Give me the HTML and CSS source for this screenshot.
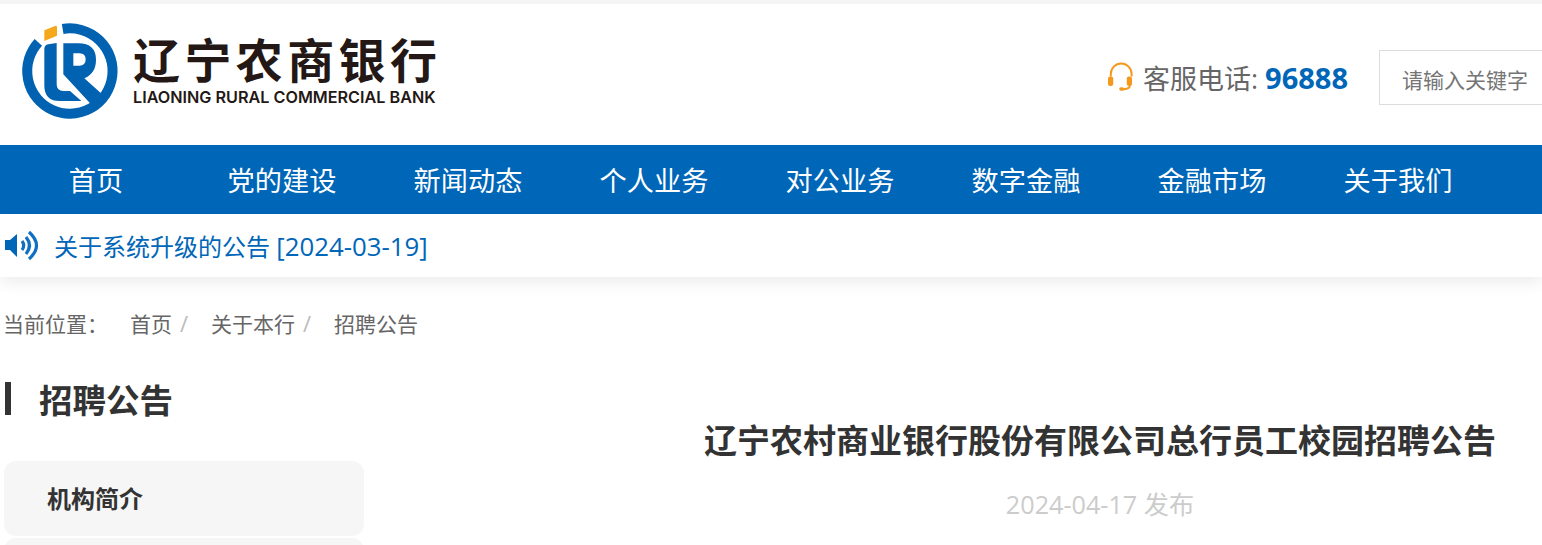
FILE: index.html
```html
<!DOCTYPE html>
<html lang="zh-CN">
<head>
    <meta charset="UTF-8">
    <meta name="viewport" content="width=device-width, initial-scale=1.0">
    <title>招聘公告</title>
    <link rel="stylesheet" href="styles.css">
</head>
<body>
    <header class="header">
        <a class="logo" href="#">
            <svg class="logo-mark" viewBox="0 0 330 330">
                <path class="ring" d="M143 42A128 128 0 1 1 70 82"/>
                <path class="spark" d="M88 46L120 33Q126 31 126 37V62L88 78Z"/>
                <path class="letter" d="M88 102Q88 90 100 88L125 84V208Q125 228 145 228H165L199 258H135Q88 258 88 212Z"/>
                <path class="letter" fill-rule="evenodd" d="M145 85H190Q243 85 243 135Q243 175 208 190L258 235L228 268L145 178ZM175 115V152H193Q212 152 212 133Q212 115 193 115Z"/>
            </svg>
            <div class="logo-text">
                <div class="logo-cn">辽宁农商银行</div>
                <div class="logo-en">LIAONING RURAL COMMERCIAL BANK</div>
            </div>
        </a>
        <div class="header-right">
            <svg class="phone-icon" viewBox="0 0 40 40">
                <path d="M6 18V15A13 13 0 0 1 32 15V18"/>
                <rect x="2.500" y="18" width="6.500" height="12" rx="2.500"/>
                <rect x="26" y="18" width="6.500" height="12" rx="2.500"/>
                <path d="M30 30Q29 34 21 34"/>
                <rect x="16.500" y="31.500" width="6" height="4.500" rx="2.200"/>
            </svg>
            <div class="phone">客服电话: <b>96888</b></div>
            <input class="search" type="text" placeholder="请输入关键字">
        </div>
    </header>

    <nav class="nav">
        <a href="#">首页</a>
        <a href="#">党的建设</a>
        <a href="#">新闻动态</a>
        <a href="#">个人业务</a>
        <a href="#">对公业务</a>
        <a href="#">数字金融</a>
        <a href="#">金融市场</a>
        <a href="#">关于我们</a>
    </nav>

    <div class="notice">
        <svg class="notice-icon" viewBox="0 0 44 40">
            <path class="horn" d="M5 14H10L17 8V31L10 24H5Z"/>
            <path d="M22 15Q25.500 19.500 22 24"/>
            <path d="M26 11Q33 19.500 26 28"/>
            <path d="M29 6Q44 19.500 29 33"/>
        </svg>
        <a href="#">关于系统升级的公告 <span class="notice-date">[2024-03-19]</span></a>
    </div>

    <div class="crumbs">
        <span class="crumbs-label">当前位置：</span>
        <a href="#">首页</a><i>/</i>
        <a href="#">关于本行</a><i>/</i>
        <a href="#">招聘公告</a>
    </div>

    <div class="content">
        <aside class="side">
            <h2 class="side-title">招聘公告</h2>
            <ul class="side-menu">
                <li>机构简介</li>
                <li></li>
            </ul>
        </aside>
        <main class="article">
            <h1 class="article-title">辽宁农村商业银行股份有限公司总行员工校园招聘公告</h1>
            <p class="article-date">2024-04-17 发布</p>
        </main>
    </div>
</body>
</html>
```

FILE: styles.css
```css
/* Global Styles */
html, body {
    height: 545px;
    overflow: hidden;
}

body {
    margin: 0;
    padding: 0;
    font-family: 'Open Sans', 'Noto Sans CJK SC', sans-serif;
    color: #666;
    background-color: #fff;
    border-top: 4px solid #f5f5f5;
}

a {
    color: inherit;
    text-decoration: none;
}

/* Header */
.header {
    display: flex;
    justify-content: space-between;
    align-items: center;
    height: 141px;
}

.logo {
    display: flex;
    align-items: center;
    margin-left: 15px;
    margin-top: -9px;
}

.logo-mark {
    width: 110px;
    height: 110px;
    flex-shrink: 0;
}

.ring {
    fill: none;
    stroke: #0062b1;
    stroke-width: 30;
}

.spark {
    fill: #f5a81c;
}

.letter {
    fill: #0062b1;
}

.logo-text {
    margin-left: 8px;
    color: #231815;
}

.logo-cn {
    font-size: 47px;
    font-weight: 700;
    line-height: 50px;
    letter-spacing: 4.400px;
    white-space: nowrap;
}

.logo-en {
    font-family: 'Inter', sans-serif;
    font-size: 16.200px;
    font-weight: 600;
    line-height: 16px;
    margin-top: 4px;
    white-space: nowrap;
}

.header-right {
    display: flex;
    align-items: center;
    margin-right: -177px;
    margin-top: 6px;
}

.phone-icon {
    width: 32px;
    height: 40px;
    fill: #f5991c;
    margin-right: 5px;
}

.phone-icon path {
    fill: none;
    stroke: #f5991c;
    stroke-width: 2.500;
}

.phone {
    font-size: 27px;
    white-space: nowrap;
    margin-right: 31px;
}

.phone b {
    color: #0066b8;
    font-size: 29px;
}

.search {
    width: 340px;
    height: 55px;
    box-sizing: border-box;
    padding: 4px 22px 0;
    border: 1px solid #ddd;
    font-family: inherit;
    font-size: 21px;
    outline: none;
}

.search::placeholder {
    color: #757575;
}

/* Nav */
.nav {
    display: flex;
    height: 69px;
    padding-left: 3px;
    background-color: #0066b8;
}

.nav a {
    width: 186px;
    font-size: 27.200px;
    line-height: 71px;
    text-align: center;
    color: #fff;
}

/* Notice */
.notice {
    display: flex;
    align-items: center;
    height: 63px;
    font-size: 24px;
    color: #0066b8;
    box-shadow: 0 6px 14px rgba(0, 0, 0, 0.07);
}

.notice-date {
    font-size: 25.800px;
}

.notice-icon {
    width: 44px;
    height: 40px;
    margin-right: 10px;
    flex-shrink: 0;
}

.notice-icon path {
    fill: none;
    stroke: #0f6fc0;
    stroke-width: 3.200;
}

.notice-icon .horn {
    fill: #0066b8;
    stroke: none;
}

/* Breadcrumbs */
.crumbs {
    display: flex;
    align-items: center;
    height: 32px;
    margin-top: 30px;
    padding-left: 3px;
    font-size: 21px;
}

.crumbs-label {
    width: 127px;
}

.crumbs i {
    width: 39px;
    padding-left: 8px;
    box-sizing: border-box;
    color: #bbb;
    font-size: 22px;
    font-style: normal;
}

/* Content */
.content {
    display: grid;
    grid-template-columns: 360px 1fr;
    column-gap: 298px;
    margin-top: 43px;
    padding: 0 4px;
}

.side-title {
    height: 33px;
    margin: 0 0 46px 1px;
    padding-left: 28px;
    border-left: 6px solid #333;
    font-size: 33.500px;
    line-height: 36px;
    font-weight: 700;
    color: #333;
}

.side-menu {
    list-style-type: none;
    margin: 0;
    padding: 0;
}

.side-menu li {
    height: 75px;
    margin-bottom: 2px;
    padding-left: 43px;
    border-radius: 12px;
    background-color: #f6f6f6;
    font-size: 24px;
    font-weight: 700;
    line-height: 76px;
    color: #333;
}

.article {
    text-align: center;
}

.article-title {
    margin: 34px 0 0;
    font-size: 33px;
    line-height: 50px;
    font-weight: 700;
    color: #333;
    white-space: nowrap;
}

.article-date {
    margin: 20px 0 0;
    font-size: 25.200px;
    line-height: 36px;
    color: #ccc;
}
```
